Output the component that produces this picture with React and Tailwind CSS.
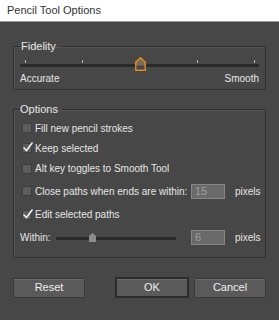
import React from "react";

const font = { fontFamily: '"Liberation Sans", Arial, sans-serif' };

const Check = ({ checked }) => (
  <span className="relative w-[10px] h-[10px] bg-[#5c5c5c] border border-[#3e3e3e] shrink-0">
    {checked && (
      <svg className="absolute -left-[1px] -top-[3px]" width="12" height="12" viewBox="0 0 12 12">
        <path d="M1.5 6.5 L4.5 9.5 L10.5 1.5" fill="none" stroke="#f0f0f0" strokeWidth="1.6" />
      </svg>
    )}
  </span>
);

const Row = ({ checked, label, className = "h-[20px]", children }) => (
  <div className={`flex items-center whitespace-nowrap ${className}`}>
    <div className="w-[177px] pl-[8px] flex items-center gap-[3px] shrink-0">
      <Check checked={checked} />
      <span>{label}</span>
    </div>
    {children}
  </div>
);

const NumBox = ({ value }) => (
  <div className="w-[34px] h-[15px] bg-[#6a6a6a] border border-[#858585] text-[#a0a0a0] text-[11px] leading-[13px] pl-[3px]">
    {value}
  </div>
);

const Pixels = ({ value }) => (
  <div className="flex items-center gap-[10px]">
    <NumBox value={value} />
    <span>pixels</span>
  </div>
);

export default function App() {
  return (
    <div className="w-[279px] h-[320px] bg-[#474747] flex flex-col text-[#e6e6e6] text-[10px]" style={font}>
      <div className="h-[22px] bg-white border-b border-[#9a9a9a] flex items-center px-[7px] text-[11px] text-[#333]">
        Pencil Tool Options
      </div>

      <div className="px-[13px] flex flex-col">
        {/* Fidelity */}
        <fieldset className="min-w-0 mt-[17px] border border-[#2f2f2f] shadow-[inset_1px_1px_0_#555] px-[6px] pb-[8px] h-[51px]">
          <legend className="ml-[1px] pr-[4px] leading-[14px] text-[11px]">Fidelity</legend>
          <div className="relative h-[18px] mt-[2px]">
            <div className="absolute left-0 right-0 top-[9px] h-[3px] bg-[#2a2a2a]" />
            <div className="absolute left-[5px] top-[5px] w-[1px] h-[3px] bg-[#bbb]" />
            <div className="absolute left-[62px] top-[5px] w-[1px] h-[3px] bg-[#bbb]" />
            <div className="absolute left-[177px] top-[5px] w-[1px] h-[3px] bg-[#bbb]" />
            <div className="absolute left-[234px] top-[5px] w-[1px] h-[3px] bg-[#bbb]" />
            <svg className="absolute left-[115px] top-[2px]" width="11" height="14" viewBox="0 0 11 14">
              <path d="M5.5 0.8 L10.2 5 L10.2 13.2 L0.8 13.2 L0.8 5 Z" fill="#7d6c5c" stroke="#e8901c" strokeWidth="1.4" />
              <rect x="1.5" y="8.5" width="8" height="4" fill="#474747" />
            </svg>
          </div>
          <div className="flex justify-between leading-[12px] text-[10px]">
            <span>Accurate</span>
            <span>Smooth</span>
          </div>
        </fieldset>

        {/* Options */}
        <fieldset className="min-w-0 mt-[12px] border border-[#2f2f2f] shadow-[inset_1px_1px_0_#555] pb-[8px]">
          <legend className="ml-[6px] pr-[4px] leading-[14px] text-[11px]">Options</legend>
          <div className="pt-[2px]">
            <Row label="Fill new pencil strokes" />
            <Row checked label="Keep selected" />
            <Row label="Alt key toggles to Smooth Tool" className="h-[21px]" />
            <Row label="Close paths when ends are within:" className="h-[24px]">
              <Pixels value="15" />
            </Row>
            <Row checked label="Edit selected paths" className="h-[23px]" />
            <div className="flex items-center h-[23px]">
              <div className="w-[177px] pl-[6px] flex items-center shrink-0">
                <span>Within:</span>
                <div className="relative ml-[5px] w-[120px] h-[12px]">
                  <div className="absolute left-0 right-0 top-[5px] h-[3px] bg-[#2a2a2a]" />
                  <svg className="absolute left-[33px] top-[1px]" width="7" height="9" viewBox="0 0 7 9">
                    <path d="M3.5 0 L7 3 L7 9 L0 9 L0 3 Z" fill="#8c8c8c" />
                  </svg>
                </div>
              </div>
              <Pixels value="6" />
            </div>
          </div>
        </fieldset>

        {/* Buttons */}
        <div className="mt-[19px] flex items-center">
          <button className="w-[72px] h-[20px] bg-[#5a5a5a] border border-[#393939] shadow-[inset_0_1px_0_#6a6a6a] text-[11px] text-[#eee]">
            Reset
          </button>
          <button className="ml-[30px] w-[74px] h-[21px] bg-[#5a5a5a] border-2 border-[#2c2c2c] shadow-[inset_0_1px_0_#6a6a6a] text-[11px] text-[#eee]">
            OK
          </button>
          <button className="ml-[5px] w-[72px] h-[20px] bg-[#5a5a5a] border border-[#393939] shadow-[inset_0_1px_0_#6a6a6a] text-[11px] text-[#eee]">
            Cancel
          </button>
        </div>
      </div>
    </div>
  );
}
